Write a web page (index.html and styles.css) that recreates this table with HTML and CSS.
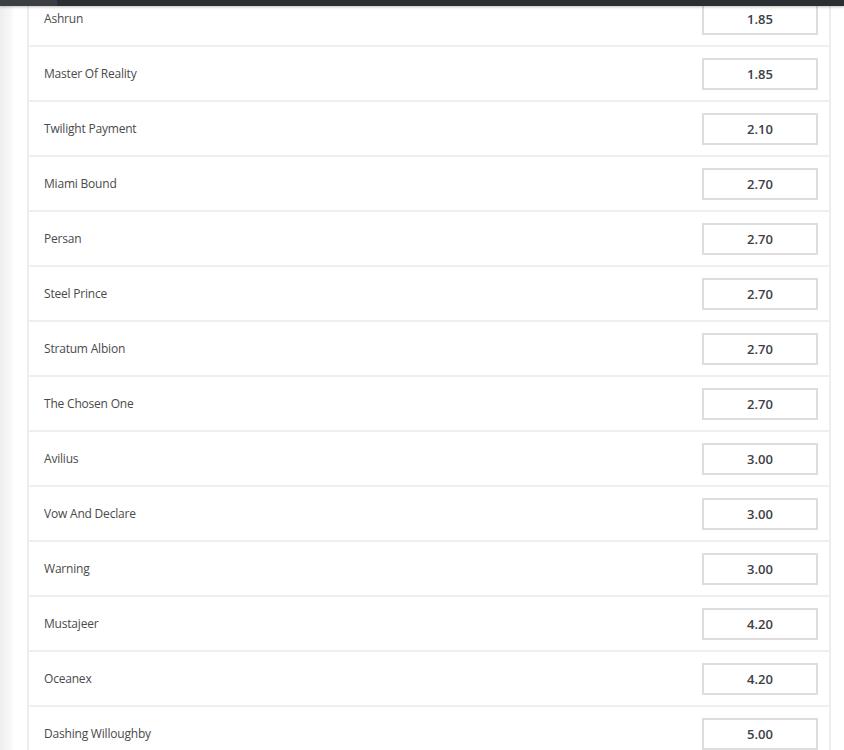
FILE: index.html
```html
<!DOCTYPE html>
<html lang="en">
<head>
    <meta charset="UTF-8">
    <meta name="viewport" content="width=device-width, initial-scale=1.0">
    <title>Odds</title>
    <link rel="stylesheet" href="styles.css">
</head>
<body>
    <div class="topbar">
        <div class="topbar-side"></div>
    </div>

    <div class="page">
        <div class="panel">
            <ul class="runners">
                <li class="runner"><span class="runner-name">Ashrun</span><input class="odds" value="1.85" readonly></li>
                <li class="runner"><span class="runner-name">Master Of Reality</span><input class="odds" value="1.85" readonly></li>
                <li class="runner"><span class="runner-name">Twilight Payment</span><input class="odds" value="2.10" readonly></li>
                <li class="runner"><span class="runner-name">Miami Bound</span><input class="odds" value="2.70" readonly></li>
                <li class="runner"><span class="runner-name">Persan</span><input class="odds" value="2.70" readonly></li>
                <li class="runner"><span class="runner-name">Steel Prince</span><input class="odds" value="2.70" readonly></li>
                <li class="runner"><span class="runner-name">Stratum Albion</span><input class="odds" value="2.70" readonly></li>
                <li class="runner"><span class="runner-name">The Chosen One</span><input class="odds" value="2.70" readonly></li>
                <li class="runner"><span class="runner-name">Avilius</span><input class="odds" value="3.00" readonly></li>
                <li class="runner"><span class="runner-name">Vow And Declare</span><input class="odds" value="3.00" readonly></li>
                <li class="runner"><span class="runner-name">Warning</span><input class="odds" value="3.00" readonly></li>
                <li class="runner"><span class="runner-name">Mustajeer</span><input class="odds" value="4.20" readonly></li>
                <li class="runner"><span class="runner-name">Oceanex</span><input class="odds" value="4.20" readonly></li>
                <li class="runner"><span class="runner-name">Dashing Willoughby</span><input class="odds" value="5.00" readonly></li>
            </ul>
        </div>
    </div>
</body>
</html>
```

FILE: styles.css
```css
html, body {
    margin: 0;
    padding: 0;
    height: 100%;
    overflow: hidden;
}

body {
    font-family: "Open Sans", "Liberation Sans", Arial, sans-serif;
    font-size: 12px;
    color: #555;
    background: linear-gradient(to right, #eeeeee 0, #f7f7f7 10px, #ffffff 14px);
}

/* 頂部深色列 */
.topbar {
    position: fixed;
    top: 0;
    left: 0;
    right: 0;
    height: 6px;
    background-color: #2b2f33;
    box-shadow: 0 1px 3px rgba(0, 0, 0, 0.25);
    z-index: 10;
}

.topbar-side {
    width: 57px;
    height: 100%;
    background-color: #3b3f43;
}

.page {
    padding-left: 27px;
    width: 804px;
}

.panel {
    background-color: #fff;
    border-left: 2px solid #eeeeee;
    border-right: 2px solid #eeeeee;
}

.runners {
    list-style: none;
    margin: -8px 0 0;
    padding: 0;
}

.runner {
    display: flex;
    align-items: center;
    justify-content: space-between;
    height: 53px;
    padding: 0 11px 0 15px;
    border-bottom: 2px solid #efefef;
}

.runner-name {
    color: #4a4a4a;
    letter-spacing: -0.2px;
}

.odds {
    box-sizing: border-box;
    width: 116px;
    height: 32px;
    border: 2px solid #dddddd;
    background: #fff;
    font-family: inherit;
    font-size: 13px;
    font-weight: 600;
    color: #3c4047;
    text-align: center;
    padding: 0;
    outline: none;
}
```
